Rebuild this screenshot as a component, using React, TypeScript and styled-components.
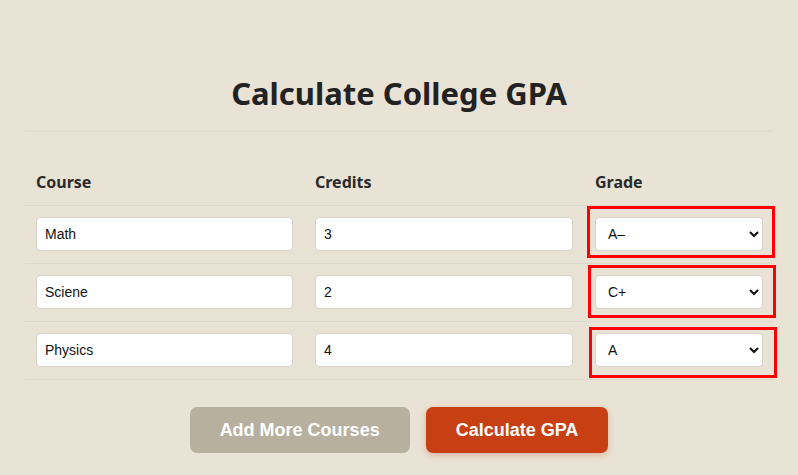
import React from "react";
import styled, { createGlobalStyle } from "styled-components";

const Global = createGlobalStyle`
  html, body { margin: 0; padding: 0; background: #e9e3d5; }
  body { font-family: "Noto Sans", "Open Sans", sans-serif; color: #2a2a2a; }
  * { box-sizing: border-box; }
`;

const Page = styled.div`
  width: 798px;
  height: 475px;
  padding: 0 25px;
  overflow: hidden;
`;

const Title = styled.h1`
  margin: 0;
  padding: 72px 0 16px;
  border-bottom: 2px solid #e2ddd3;
  text-align: center;
  font-family: "Noto Sans", sans-serif;
  font-weight: 700;
  font-size: 31px;
  line-height: 42px;
  color: #222;
`;

const Table = styled.div`
  margin-top: 26px;
  display: grid;
  grid-template-columns: 279px 280px 1fr;
`;

const HeadCell = styled.div`
  padding: 13px 11px 12px;
  font-family: "Noto Sans", sans-serif;
  font-weight: 700;
  font-size: 16px;
  line-height: 22px;
  color: #2a2a2a;
`;

const Cell = styled.div`
  position: relative;
  padding: 11px 11px 12px;
  border-top: 1px solid #ddd8cc;
`;

const LastLine = styled.div`
  grid-column: 1 / -1;
  border-top: 1px solid #ddd8cc;
`;

const TextInput = styled.input`
  width: 100%;
  height: 34px;
  padding: 0 8px;
  border: 1px solid #d6d3cc;
  border-radius: 4px;
  background: #fff;
  font-family: "Liberation Sans", Arial, sans-serif;
  font-size: 14px;
  color: #111;
  outline: none;
`;

const Select = styled.select`
  width: 168px;
  height: 34px;
  padding: 0 8px;
  border: 1px solid #d6d3cc;
  border-radius: 4px;
  background: #fff;
  font-family: "Liberation Sans", Arial, sans-serif;
  font-size: 14px;
  color: #111;
  outline: none;
`;

const Highlight = styled.span<{ $l: number; $t: number; $w: number; $h: number }>`
  position: absolute;
  left: ${(p) => p.$l}px;
  top: ${(p) => p.$t}px;
  width: ${(p) => p.$w}px;
  height: ${(p) => p.$h}px;
  border: 3px solid #ff0000;
  pointer-events: none;
`;

const Actions = styled.div`
  display: flex;
  justify-content: center;
  gap: 16px;
  margin-top: 27px;
`;

const Button = styled.button<{ $primary?: boolean }>`
  height: 46px;
  padding: 0 30px;
  border: none;
  border-radius: 7px;
  background: ${(p) => (p.$primary ? "#c83f14" : "#b8b09f")};
  box-shadow: ${(p) => (p.$primary ? "0 2px 6px rgba(200,63,20,0.3)" : "none")};
  color: #fff;
  font-family: "Liberation Sans", Arial, sans-serif;
  font-weight: 700;
  font-size: 18px;
  cursor: pointer;
`;

const rows = [
  { course: "Math", credits: "3", grade: "A–", hl: { l: 3, t: 0, w: 188, h: 52 } },
  { course: "Sciene", credits: "2", grade: "C+", hl: { l: 4, t: 1, w: 188, h: 53 } },
  { course: "Physics", credits: "4", grade: "A", hl: { l: 5, t: 5, w: 188, h: 51 } },
];

const grades = ["A+", "A", "A–", "B+", "B", "B–", "C+", "C", "C–", "D+", "D", "D–", "F"];

export default function App() {
  return (
    <>
      <Global />
      <Page>
        <Title>Calculate College GPA</Title>
        <Table>
          <HeadCell>Course</HeadCell>
          <HeadCell>Credits</HeadCell>
          <HeadCell>Grade</HeadCell>
          {rows.map((r) => (
            <React.Fragment key={r.course}>
              <Cell>
                <TextInput defaultValue={r.course} />
              </Cell>
              <Cell>
                <TextInput defaultValue={r.credits} />
              </Cell>
              <Cell>
                <Select defaultValue={r.grade}>
                  {grades.map((g) => (
                    <option key={g} value={g}>
                      {g}
                    </option>
                  ))}
                </Select>
                <Highlight $l={r.hl.l} $t={r.hl.t} $w={r.hl.w} $h={r.hl.h} />
              </Cell>
            </React.Fragment>
          ))}
          <LastLine />
        </Table>
        <Actions>
          <Button>Add More Courses</Button>
          <Button $primary>Calculate GPA</Button>
        </Actions>
      </Page>
    </>
  );
}
